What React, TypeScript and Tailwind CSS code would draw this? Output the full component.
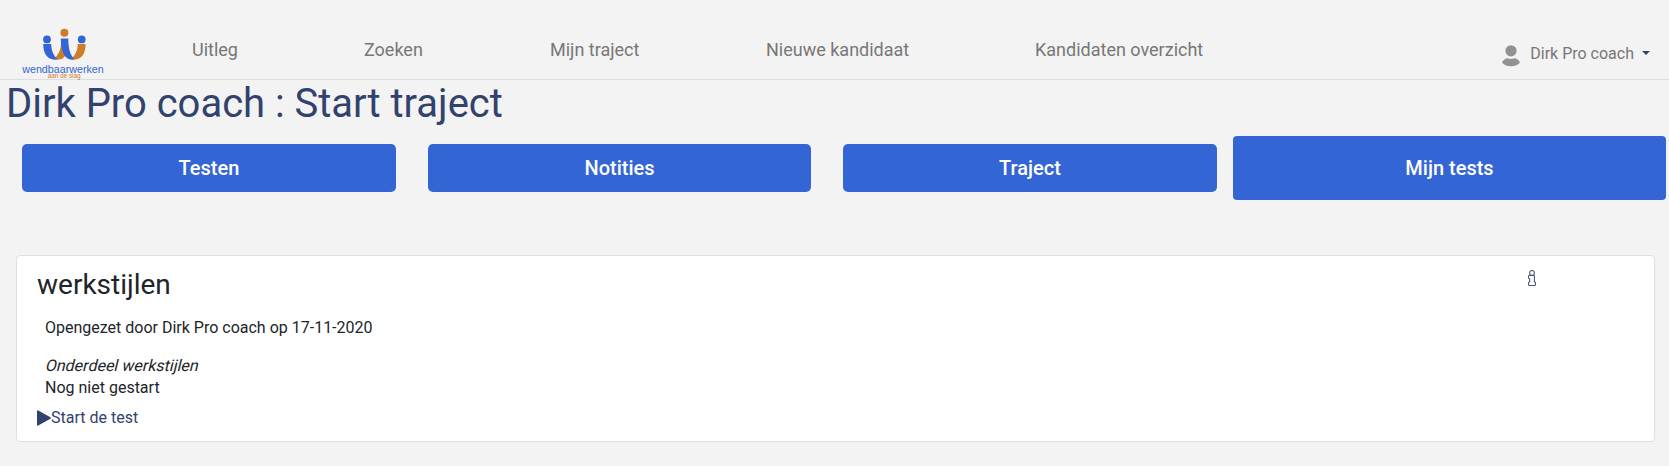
const navItems = [
  { label: "Uitleg", spacing: "ml-[86px] w-[172px]" },
  { label: "Zoeken", spacing: "w-[186px]" },
  { label: "Mijn traject", spacing: "w-[216px]" },
  { label: "Nieuwe kandidaat", spacing: "w-[269px]" },
  { label: "Kandidaten overzicht", spacing: "w-[200px]" },
];

const tabs = [
  { label: "Testen", size: "ml-[22px] h-12 w-[374px] rounded-[5px]" },
  { label: "Notities", size: "ml-8 h-12 w-[383px] rounded-[5px]" },
  { label: "Traject", size: "ml-8 h-12 w-[374px] rounded-[5px]" },
  { label: "Mijn tests", size: "ml-4 h-16 w-[433px] rounded-[4px]" },
];

function Logo() {
  return (
    <svg className="mt-7 h-[52px] w-[84px] shrink-0" viewBox="0 0 84 52" role="img" aria-label="wendbaarwerken">
      <path d="M39 15 H46 C46 21 45 25 43 28 C41 31 38.5 31.6 34 31.6 H31 C36 28 39 22 39 15Z" fill="#cf7c27" />
      <path d="M21.2 16 H29.2 C29.2 22 31.5 28 36 31.6 H33 C25 31.6 21.2 25 21.2 16Z" fill="#3465d4" />
      <path d="M55.7 16 H63.6 C63.6 25 60 31.6 52 31.6 H48 C53 28 55.7 23 55.7 16Z" fill="#cf7c27" />
      <path d="M38.8 10.5 H46.3 C46.3 20 48 27 52.8 31.6 H50 C42 31.6 38.8 22 38.8 10.5Z" fill="#3465d4" />
      <circle cx="25" cy="11.4" r="3.9" fill="#3465d4" />
      <circle cx="42.4" cy="4.8" r="4" fill="#cf7c27" />
      <circle cx="59.7" cy="11.4" r="3.9" fill="#3465d4" />
      <text x="0.2" y="44.7" fontFamily="Liberation Sans, sans-serif" fontSize="11" textLength="81.6" lengthAdjust="spacingAndGlyphs" fill="#3465d4">wendbaarwerken</text>
      <text x="25.8" y="50.3" fontFamily="Liberation Sans, sans-serif" fontSize="6.6" textLength="32.8" lengthAdjust="spacingAndGlyphs" fill="#cf7c27">aan de slag</text>
    </svg>
  );
}

function UserIcon() {
  return (
    <svg className="h-[22px] w-[18px]" viewBox="0 0 18 22" fill="#929292">
      <circle cx="9" cy="5.8" r="5.6" />
      <path d="M0 17.2 C1.5 14.5 4 13.2 5.5 13.2 Q9 14.6 12.5 13.2 C14 13.2 16.5 14.5 18 17.2 C16.5 19.7 13 21.2 9 21.2 C5 21.2 1.5 19.7 0 17.2Z" />
    </svg>
  );
}

function InfoIcon() {
  return (
    <svg className="h-4 w-2" viewBox="0 0 8 16" fill="none" stroke="#46557f" strokeWidth="1.1">
      <circle cx="4" cy="2.9" r="2.4" />
      <path d="M1.3 5.5 H5.6 Q6.4 5.5 6.4 6.4 V11.8 Q7.5 12.2 7.5 13.3 V14.6 Q7.5 15.5 6.6 15.5 H1.4 Q.5 15.5 .5 14.6 V13.3 Q.5 12.2 1.7 11.8 V8.9 Q.5 8.5 .5 7.5 V6.5 Q.5 5.5 1.3 5.5Z" />
    </svg>
  );
}

export default function App() {
  return (
    <div className="h-[466px] overflow-hidden bg-[#f3f3f3] font-['Roboto',sans-serif] text-base text-[#212529]">
      <header className="flex h-20 border-b border-[#dedede] pl-[22px] text-[#777777]">
        <Logo />
        <nav className="flex pt-9 text-lg leading-[27px]">
          {navItems.map((item) => (
            <a key={item.label} href="#" className={`block whitespace-nowrap ${item.spacing}`}>
              {item.label}
            </a>
          ))}
        </nav>
        <button className="mt-[42px] mr-[19px] ml-auto flex h-6 items-center">
          <span className="mt-1 mr-[10px]">
            <UserIcon />
          </span>
          <span className="leading-6">Dirk Pro coach</span>
          <svg className="mb-[3px] ml-2 h-1 w-2" viewBox="0 0 8 4" fill="#32426e">
            <path d="M0 0H8L4 4Z" />
          </svg>
        </button>
      </header>

      <h1 className="h-12 pl-[6px] text-[40px] leading-[48px] tracking-[-0.02px] text-[#32426e]">
        Dirk Pro coach : Start traject
      </h1>

      <div className="mt-2 flex h-16 items-center">
        {tabs.map((tab) => (
          <button
            key={tab.label}
            className={`shrink-0 bg-[#3465d4] text-xl leading-[30px] font-medium text-white ${tab.size}`}
          >
            {tab.label}
          </button>
        ))}
      </div>

      <section className="mt-[55px] mr-[14px] ml-4 flex h-[187px] justify-between rounded-[4px] border border-[#dfdfdf] bg-white pl-5">
        <div>
          <h2 className="pt-3 text-[28px] leading-[34px]">werkstijlen</h2>
          <p className="mt-[14px] pl-2 leading-6">Opengezet door Dirk Pro coach op 17-11-2020</p>
          <p className="mt-[14px] ml-[9px] w-fit -skew-x-[14deg] leading-6">Onderdeel werkstijlen</p>
          <p className="-mt-[2px] pl-2 leading-6">Nog niet gestart</p>
          <a href="#" className="mt-[6px] flex items-center leading-6 text-[#32426e]">
            <svg className="h-4 w-[14px]" viewBox="0 0 14 16" fill="#32426e">
              <path d="M0 1 Q0 -.2 1.2 .4 L13.4 7.3 Q14.4 8 13.4 8.7 L1.2 15.6 Q0 16.2 0 15Z" />
            </svg>
            Start de test
          </a>
        </div>
        <button className="mt-[14px] mr-[118px] flex h-4" aria-label="Info">
          <InfoIcon />
        </button>
      </section>
    </div>
  );
}
